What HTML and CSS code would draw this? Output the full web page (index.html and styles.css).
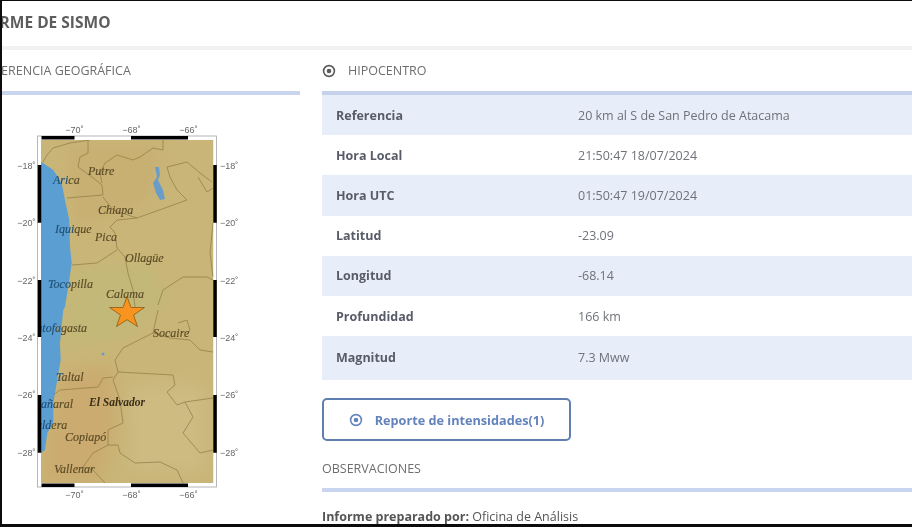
FILE: index.html
```html
<!DOCTYPE html>
<html lang="es">
<head>
  <meta charset="UTF-8" />
  <title>Informe de Sismo</title>
  <meta name="viewport" content="width=device-width, initial-scale=1.0" />
  <link rel="stylesheet" href="styles.css">
</head>
<body>
  <div class="pantalla">
    <h1 class="titulo">INFORME DE SISMO</h1>

    <div class="columnas">
      <section class="col-mapa">
        <h2 class="seccion seccion-mapa">REFERENCIA GEOGRÁFICA</h2>
        <svg class="mapa" viewBox="0 120 300 385" width="300" height="385" role="img" aria-label="Mapa del epicentro">
          <defs>
            <clipPath id="recorte"><rect x="41" y="140" width="172.5" height="343" /></clipPath>
            <filter id="difuso" x="-20%" y="-20%" width="140%" height="140%"><feGaussianBlur stdDeviation="8" /></filter>
          </defs>
          <!-- marco -->
          <rect x="37.5" y="136" width="179" height="351" fill="#fff" stroke="#a4a4aa" stroke-width="0.8" />
          <g clip-path="url(#recorte)">
            <rect x="41" y="140" width="172.5" height="343" fill="#c9b577" />
            <!-- tonos del terreno -->
            <g filter="url(#difuso)">
              <path d="M66 145 L160 145 L150 200 L75 230 Z" fill="#c8af72" />
              <path d="M72 270 L150 262 L170 300 L130 335 L62 350 Z" fill="#c2b877" />
              <path d="M62 370 L112 365 L118 420 L100 483 L41 483 L48 430 Z" fill="#cbab70" />
              <path d="M130 385 L205 385 L205 470 L130 470 Z" fill="#cdbb82" />
            </g>
            <!-- costa -->
            <path class="mar" d="M41 161.7 L53.3 170 L61.7 183 L65 200 L69.3 220 L70 246.7 L71.7 263 L69.3 280 L65 306.7 L63.3 310 L60 343 L60.7 360 L56.7 383 L53.3 403 L53.3 423 L47.3 433 L45 450 L41 452.7 Z" />
            <path class="lago" d="M155 167 L159 167 L160 175 L158 180 L163 190 L165 199 L160 200 L156 193 L153 183 L157 177 Z" />
            <circle class="lago" cx="103" cy="354" r="1.5" />
            <!-- limites -->
            <g class="limites">
              <path d="M90 140 L70 143 L53 148 L47 155 L43 162" />
              <path d="M88 140 L88 153 L80 157 L78 167 L92 177 L102 185 L103 195 L67 198" />
              <path d="M163 140 L163 150 L153 148 L140 157 L133 160 L117 155 L105 163 L100 173 L102 183" />
              <path d="M103 197 L113 210 L137 218 L187 200 L177 190 L170 177 L167 167 L187 162 L200 173 L212 182" />
              <path d="M198 177 L207 192 L213 188" />
              <path d="M137 218 L117 220 L110 227 L115 233 L117 248 L125 257 L128 273 L133 290 L135 307" />
              <path d="M72 265 L97 263 L117 250" />
              <path d="M158 305 L163 290 L183 277 L207 277 L213 280" />
              <path d="M213 223 L210 253 L213 277" />
              <path d="M158 310 L153 333 L123 348 L115 360 L118 372" />
              <path d="M153 333 L170 338 L190 340 L200 350 L213 352" />
              <path d="M178 323 L187 320 L190 330 L187 335" />
              <path d="M118 372 L173 375 L175 385 L167 392 L177 405 L185 402 L193 417 L183 433 L200 453 L213 450" />
              <path d="M185 402 L213 398" />
              <path d="M118 372 L113 380 L120 400 L123 423 L108 430 L108 445 L118 445 L120 453 L135 463 L160 462 L177 470 L183 483" />
              <path d="M113 377 L103 378 L98 387 L60 390 L53 395" />
              <path d="M108 445 L93 453 L83 467 L93 470 L105 483" />
            </g>
            <!-- ciudades -->
            <g class="ciudad">
              <text x="88" y="175">Putre</text>
              <text x="98" y="214">Chiapa</text>
              <text x="95" y="241">Pica</text>
              <text x="125" y="262">Ollagüe</text>
              <text x="106" y="298">Calama</text>
              <text x="153" y="337">Socaire</text>
              <text class="capital" x="89" y="406">El Salvador</text>
              <text x="65" y="441">Copiapó</text>
              <text x="54" y="473">Vallenar</text>
              <text x="53" y="184"><tspan class="costa">Ari</tspan>ca</text>
              <text x="55" y="233"><tspan class="costa">Iqui</tspan>que</text>
              <text x="48" y="288"><tspan class="costa">Toco</tspan>pilla</text>
              <text x="29" y="332"><tspan class="costa">Antof</tspan>agasta</text>
              <text x="56" y="381"><tspan class="costa">T</tspan>altal</text>
              <text x="27" y="408"><tspan class="costa">Chañ</tspan>aral</text>
              <text x="28" y="429"><tspan class="costa">Cald</tspan>era</text>
            </g>
          </g>
          <!-- marcas -->
          <g class="marcas">
            <path d="M41.5 137.75 H74.5 M131 137.75 H188 M41.5 485.25 H74.5 M131 485.25 H188" />
            <path d="M39.5 165 V222.7 M39.5 280 V337 M39.5 395 V452.7 M215 165 V222.7 M215 280 V337 M215 395 V452.7" />
          </g>
          <!-- estrella -->
          <path class="estrella" d="M127 296.5 L131 307.5 L144.5 307.5 L133.5 315 L137.5 326.5 L127 319.7 L116.5 326.5 L120.5 315 L109.5 307.5 L123 307.5 Z" />
          <!-- grados -->
          <g class="grados">
            <text x="74.5" y="133">−70˚</text>
            <text x="131.5" y="133">−68˚</text>
            <text x="188.5" y="133">−66˚</text>
            <text x="74.5" y="498">−70˚</text>
            <text x="131.5" y="498">−68˚</text>
            <text x="188.5" y="498">−66˚</text>
          </g>
          <g class="grados grados-izq">
            <text x="35.5" y="169">−18˚</text>
            <text x="35.5" y="226">−20˚</text>
            <text x="35.5" y="284">−22˚</text>
            <text x="35.5" y="341">−24˚</text>
            <text x="35.5" y="398">−26˚</text>
            <text x="35.5" y="456">−28˚</text>
          </g>
          <g class="grados grados-der">
            <text x="220" y="169">−18˚</text>
            <text x="220" y="226">−20˚</text>
            <text x="220" y="284">−22˚</text>
            <text x="220" y="341">−24˚</text>
            <text x="220" y="398">−26˚</text>
            <text x="220" y="456">−28˚</text>
          </g>
        </svg>
      </section>

      <section class="col-datos">
        <h2 class="seccion">
          <svg class="icono" viewBox="0 0 14 14" width="14" height="14"><circle cx="7" cy="7" r="5.4" fill="none" stroke="currentColor" stroke-width="1.6" /><circle cx="7" cy="7" r="2.3" fill="currentColor" /></svg>
          HIPOCENTRO
        </h2>

        <div class="tabla">
          <div class="fila"><span class="etiqueta">Referencia</span><span class="valor">20 km al S de San Pedro de Atacama</span></div>
          <div class="fila"><span class="etiqueta">Hora Local</span><span class="valor">21:50:47 18/07/2024</span></div>
          <div class="fila"><span class="etiqueta">Hora UTC</span><span class="valor">01:50:47 19/07/2024</span></div>
          <div class="fila"><span class="etiqueta">Latitud</span><span class="valor">-23.09</span></div>
          <div class="fila"><span class="etiqueta">Longitud</span><span class="valor">-68.14</span></div>
          <div class="fila"><span class="etiqueta">Profundidad</span><span class="valor">166 km</span></div>
          <div class="fila ultima"><span class="etiqueta">Magnitud</span><span class="valor">7.3 Mww</span></div>
        </div>

        <a class="btn-reporte" href="#">
          <svg class="icono" viewBox="0 0 14 14" width="14" height="14"><circle cx="7" cy="7" r="5.4" fill="none" stroke="currentColor" stroke-width="1.6" /><circle cx="7" cy="7" r="2.3" fill="currentColor" /></svg>
          Reporte de intensidades(1)
        </a>

        <h2 class="seccion seccion-obs">OBSERVACIONES</h2>
        <p class="nota"><b>Informe preparado por:</b> Oficina de Análisis</p>
      </section>
    </div>
  </div>
</body>
</html>
```

FILE: styles.css
```css
* {
  box-sizing: border-box;
}

body {
  margin: 0;
  height: 527px;
  background: #0c0c0c;
  overflow: hidden;
  font-family: 'Open Sans', sans-serif;
  color: #555;
}

.pantalla {
  height: 523px;
  margin: 1px 0 0 2px;
  background: #fff;
  overflow: hidden;
  filter: blur(0.4px);
}

.titulo {
  margin: 0 0 0 -41px;
  height: 45px;
  padding-top: 11px;
  font-size: 15.5px;
  line-height: 20px;
  font-weight: 700;
  color: #5d5d5d;
}

.columnas {
  display: flex;
  border-top: 4px solid #f1f1f2;
}

.col-mapa {
  width: 298px;
  margin-right: 22px;
  flex: none;
}

.col-datos {
  flex: 1;
  min-width: 0;
}

.seccion {
  display: flex;
  align-items: center;
  gap: 12px;
  margin: 0;
  height: 41px;
  font-size: 12.5px;
  font-weight: 400;
  color: #6e6e6e;
}

.seccion-mapa {
  margin-left: -22px;
  height: 45px;
  padding-bottom: 1px;
  border-bottom: 4px solid #c9d4ee;
}

.icono {
  flex: none;
  color: #5a5a5a;
}

.mapa {
  display: block;
  margin-top: 25px;
  margin-left: -2px;
}

.mar {
  fill: #5b9fd2;
}

.lago {
  fill: #6a9cc8;
}

.limites path {
  fill: none;
  stroke: #96824a;
  stroke-width: 0.8;
}

.marcas path {
  fill: none;
  stroke: #000;
  stroke-width: 3.5;
}

.estrella {
  fill: #f7931e;
  stroke: #8a5a10;
  stroke-width: 0.8;
}

.ciudad text {
  font-family: 'Liberation Serif', serif;
  font-size: 12px;
  font-style: italic;
  fill: #5a4a25;
  stroke: #5a4a25;
  stroke-width: 0.15;
}

.ciudad .capital {
  font-size: 11.5px;
  font-weight: 700;
  fill: #3a2e18;
  stroke: none;
}

.ciudad .costa {
  fill: #1f4f78;
  stroke: #1f4f78;
}

.grados text {
  font-family: 'Liberation Sans', sans-serif;
  font-size: 9px;
  fill: #666;
  text-anchor: middle;
}

.grados-izq text {
  text-anchor: end;
}

.grados-der text {
  text-anchor: start;
}

.tabla {
  border-top: 4px solid #c6d1ec;
  font-size: 12.5px;
}

.fila {
  display: flex;
  align-items: center;
  height: 40.2px;
  padding-left: 14px;
}

.fila:nth-child(odd) {
  background: #e7edf9;
}

.fila.ultima {
  height: 44px;
  padding-bottom: 2px;
}

.etiqueta {
  width: 242px;
  font-weight: 700;
  color: #585c68;
}

.valor {
  color: #6f7278;
}

.btn-reporte {
  display: flex;
  align-items: center;
  justify-content: center;
  gap: 12px;
  width: 249px;
  height: 43px;
  margin-top: 18px;
  border: 2px solid #5f7fb0;
  border-radius: 5px;
  color: #6483bd;
  font-size: 12.7px;
  font-weight: 700;
  text-decoration: none;
}

.btn-reporte .icono {
  color: #6483bd;
}

.seccion-obs {
  height: 47px;
  margin-top: 4px;
  padding-top: 4px;
  border-bottom: 4px solid #c9d4ee;
}

.nota {
  margin: 17px 0 0;
  font-size: 12.5px;
  line-height: 16px;
  color: #555;
}
```
